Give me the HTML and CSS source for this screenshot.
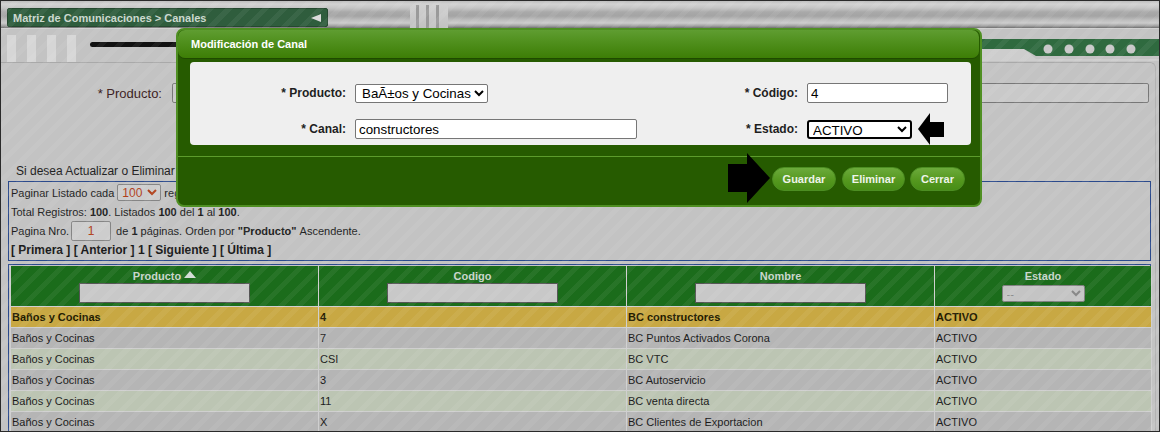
FILE: index.html
```html
<!DOCTYPE html>
<html lang="es">
<head>
<meta charset="utf-8">
<title>Matriz de Comunicaciones &gt; Canales</title>
<link rel="stylesheet" href="styles.css">
</head>
<body>
<div class="frame">
  <div class="topbar">
    <div class="crumb"><span>Matriz de Comunicaciones &gt; Canales</span><span class="tri"></span></div>
    <div class="grip"><i></i><i></i><i></i></div>
  </div>
  <div class="subbar">
    <div class="blocks"><i></i><i></i><i></i><i></i></div>
    <div class="blackline"></div>
    <svg class="band" width="200" height="34" viewBox="0 0 200 34">
      <polygon points="0,21 65,21 77,31 200,31 200,33 0,33" fill="#cdcdcd"/>
      <polygon points="0,11 200,11 200,28 77,28 65,21 0,21" fill="#2f6a3f"/>
      <circle cx="89" cy="21" r="4.5" fill="#c8c8c8"/>
      <circle cx="110" cy="21" r="4.5" fill="#c8c8c8"/>
      <circle cx="131" cy="21" r="4.5" fill="#c8c8c8"/>
      <circle cx="151" cy="21" r="4.5" fill="#c8c8c8"/>
      <circle cx="172" cy="21" r="4.5" fill="#c8c8c8"/>
    </svg>
  </div>
  <div class="content">
    <div class="filter">
      <span class="flabel">* Producto:</span>
      <span class="finput"></span>
    </div>
    <div class="hint">Si desea Actualizar o Eliminar un registro, haga clic sobre la fila correspondiente.</div>
    <div class="paging">
      <div class="pline">Paginar Listado cada <select class="psel"><option>100</option></select> registros por página.</div>
      <div class="pline">Total Registros:&nbsp;<b>100</b>. Listados&nbsp;<b>100</b>&nbsp;del&nbsp;<b>1</b>&nbsp;al&nbsp;<b>100</b>.</div>
      <div class="pline">Pagina Nro. <span class="pinput">1</span> de&nbsp;<b>1</b>&nbsp;páginas. Orden por&nbsp;<b>"Producto"</b>&nbsp;Ascendente.</div>
      <div class="pline nav">[ Primera ] [ Anterior ] 1 [ Siguiente ] [ Última ]</div>
    </div>
    <div class="tablebox">
      <table class="grid">
        <colgroup><col class="c1"><col class="c2"><col class="c3"><col class="c4"></colgroup>
        <thead>
          <tr>
            <th><div class="ht">Producto <span class="up"></span></div><span class="hinput"></span></th>
            <th><div class="ht">Codigo</div><span class="hinput"></span></th>
            <th><div class="ht">Nombre</div><span class="hinput"></span></th>
            <th><div class="ht">Estado</div><select class="hsel"><option>--</option></select></th>
          </tr>
        </thead>
        <tbody>
          <tr class="sel"><td>Baños y Cocinas</td><td>4</td><td>BC constructores</td><td>ACTIVO</td></tr>
          <tr class="odd"><td>Baños y Cocinas</td><td>7</td><td>BC Puntos Activados Corona</td><td>ACTIVO</td></tr>
          <tr class="even"><td>Baños y Cocinas</td><td>CSI</td><td>BC VTC</td><td>ACTIVO</td></tr>
          <tr class="odd"><td>Baños y Cocinas</td><td>3</td><td>BC Autoservicio</td><td>ACTIVO</td></tr>
          <tr class="even"><td>Baños y Cocinas</td><td>11</td><td>BC venta directa</td><td>ACTIVO</td></tr>
          <tr class="odd"><td>Baños y Cocinas</td><td>X</td><td>BC Clientes de Exportacion</td><td>ACTIVO</td></tr>
        </tbody>
      </table>
    </div>
  </div>

  <div class="modal">
    <div class="mtitle">Modificación de Canal</div>
    <div class="mpanel">
      <label class="mlabel">* Producto:</label>
      <div class="mfield"><select class="msel"><option>BaÃ±os y Cocinas</option></select></div>
      <label class="mlabel">* Código:</label>
      <div class="mfield"><input class="minput" type="text" value="4"></div>
      <label class="mlabel">* Canal:</label>
      <div class="mfield"><input class="minput" type="text" value="constructores"></div>
      <label class="mlabel">* Estado:</label>
      <div class="mfield"><select class="msel estado"><option>ACTIVO</option></select></div>
    </div>
    <div class="msep"></div>
    <div class="mbuttons">
      <button class="btn b1">Guardar</button>
      <button class="btn b2">Eliminar</button>
      <button class="btn b3">Cerrar</button>
    </div>
  </div>

  <svg class="arrow a-left" width="28" height="34" viewBox="0 0 28 34">
    <polygon points="0,17 12,1 12,10 26,10 26,25 12,25 12,33" fill="#000"/>
  </svg>
  <svg class="arrow a-right" width="43" height="51" viewBox="0 0 43 51">
    <polygon points="0,11 19,11 19,0 42,25 19,50 19,39 0,39" fill="#000"/>
  </svg>
</div>
</body>
</html>
```
FILE: styles.css
```css
* { box-sizing: border-box; }
html, body { margin: 0; padding: 0; }
body { font-family: "Liberation Sans", Arial, sans-serif; background: #ffffff; }

.frame {
  position: relative;
  width: 1160px;
  height: 432px;
  border: 1px solid #2a2a2a;
  background: #c3c3c3;
  overflow: hidden;
}
.frame::after {
  content: "";
  position: absolute;
  inset: 0;
  pointer-events: none;
  z-index: 1;
  background: repeating-linear-gradient(135deg, rgba(255,255,255,0) 0 8px, rgba(255,255,255,0.055) 8px 13px);
}

/* top bar */
.topbar {
  height: 27px;
  display: flex;
  align-items: flex-start;
  background: linear-gradient(to bottom, #bdbdbd 0, #d2d2d2 3px, #c4c4c4 7px, #a9a9a9 11px, #a4a4a4 15px, #bdbdbd 19px, #cbcbcb 22px, #a0a0a0 25px, #6e6e6e 27px);
}
.crumb {
  margin: 7px 0 0 6px;
  width: 321px;
  height: 19px;
  display: flex;
  align-items: center;
  padding: 0 4px 0 5px;
  background: #2f5d3d;
  border: 1px solid #24482f;
  border-radius: 2px;
  color: #cbd8ce;
  font-weight: bold;
  font-size: 11px;
}
.tri {
  margin-left: auto;
  margin-right: 2px;
  width: 0; height: 0;
  border-top: 4px solid transparent;
  border-bottom: 4px solid transparent;
  border-right: 10px solid #dcdcdc;
}
.grip {
  margin: 4px 0 0 82px;
  width: 38px;
  height: 23px;
  display: flex;
  gap: 7px;
  padding-left: 6px;
  background: linear-gradient(to bottom, #d0d0d0, #c2c2c2);
}
.grip i {
  display: block;
  width: 3px;
  height: 100%;
  background: #9a9a9a;
}

/* sub bar */
.subbar {
  height: 34px;
  display: flex;
  align-items: flex-start;
  border-top: 1px solid #d0d0d0;
}
.blocks {
  margin: 6px 0 0 6px;
  display: flex;
  gap: 11px;
}
.blocks i {
  display: block;
  width: 9px;
  height: 27px;
  background: #d6d6d6;
}
.blackline {
  margin: 13px 0 0 14px;
  width: 120px;
  height: 5px;
  border-radius: 3px;
  background: #111;
}
.band { margin-left: auto; margin-top: -1px; display: block; }

/* content */
.content {
  border-top: 1px solid #a9a9a9;
  border-right: 1px solid #b2b2b2;
  border-radius: 0 6px 0 0;
  margin-right: 3px;
}
.filter {
  margin-top: 20px;
  height: 20px;
  display: flex;
  align-items: center;
}
.flabel {
  width: 161px;
  text-align: right;
  font-size: 13px;
  color: #3a1c1c;
}
.finput {
  margin-left: 10px;
  width: 977px;
  height: 20px;
  border: 1px solid #777;
  border-radius: 2px;
  background: #c9c9c9;
}
.hint {
  margin-top: 61px;
  padding-left: 15px;
  font-size: 12px;
  line-height: 14px;
  color: #222;
  white-space: nowrap;
}
.paging {
  margin: 3px 4px 0 7px;
  border: 1px solid #2b4a8c;
  padding: 1px 2px 1px 2px;
  font-size: 11px;
  color: #1e1e1e;
}
.pline {
  height: 19px;
  display: flex;
  align-items: center;
  white-space: nowrap;
}
.psel {
  margin: 0 3px;
  width: 44px;
  height: 17px;
  font-size: 12px;
  font-family: "Liberation Sans", Arial, sans-serif;
  color: #b0401a;
  background: #cdcdcd;
  border: 1px solid #858585;
  border-radius: 2px;
  padding: 0;
}
.pinput {
  margin: 0 5px 0 2px;
  width: 40px;
  height: 20px;
  display: flex;
  align-items: center;
  justify-content: center;
  font-size: 12px;
  color: #b0401a;
  background: #cdcdcd;
  border: 1px solid #858585;
  border-radius: 2px;
}
.nav { font-size: 12px; font-weight: bold; color: #1a1a1a; }

.tablebox {
  margin: 3px 4px 0 7px;
  border: 1px solid #2b4a8c;
  border-bottom: none;
  padding: 1px 0 0 1px;
  height: 200px;
}
.grid {
  width: 1141px;
  table-layout: fixed;
  border-collapse: collapse;
}
.grid col.c1, .grid col.c2, .grid col.c3 { width: 308px; }
.grid col.c4 { width: 217px; }
.grid th {
  height: 40px;
  padding: 3px 0 0;
  vertical-align: top;
  background: #1b6c1b;
  border: 1px solid #cfcfcf;
  border-top: none;
  color: #c9d6cc;
  font-size: 11px;
  font-weight: bold;
}
.ht { height: 14px; line-height: 13px; display: flex; justify-content: center; align-items: center; gap: 3px; }
.up {
  width: 0; height: 0;
  border-left: 6px solid transparent;
  border-right: 6px solid transparent;
  border-bottom: 7px solid #d4ddd6;
  margin-top: -3px;
}
.hinput {
  display: inline-block;
  width: 171px;
  height: 20px;
  margin-top: 0;
  background: #c8c8c8;
  border: 1px solid #555;
}
.hsel {
  width: 83px;
  height: 17px;
  margin-top: 2px;
  background: #c4c4c4;
  color: #888;
  font-size: 11px;
  border: 1px solid #808080;
  border-radius: 2px;
}
.grid td {
  height: 21px;
  padding: 0 2px 0 1px;
  border: 1px solid #cfcfcf;
  font-size: 11px;
  color: #1a1a1a;
  white-space: nowrap;
}
.grid tr.sel td { background: #c8a843; font-weight: bold; color: #221a00; }
.grid tr.odd td { background: #b5b5b5; }
.grid tr.even td { background: #bcc5b3; }

/* modal */
.modal {
  position: absolute;
  left: 175px;
  top: 27px;
  width: 806px;
  height: 179px;
  z-index: 2;
  background: #265b00;
  border: 2px solid #4f8f22;
  border-radius: 8px;
}
.mtitle {
  height: 28px;
  margin-right: 1px;
  padding-left: 13px;
  line-height: 28px;
  font-size: 11px;
  font-weight: bold;
  color: #ffffff;
  border-radius: 7px;
  background: linear-gradient(to bottom, #5f9d31 0, #4f8f1c 45%, #3d7e06 100%);
  box-shadow: 0 1px 0 #1f4a00;
}
.mpanel {
  margin: 4px 9px 0 12px;
  height: 83px;
  background: #efefef;
  border-radius: 4px;
  padding: 21px 0 6px 0;
  display: grid;
  grid-template-columns: 156px 282px 152px 141px;
  grid-template-rows: 20px 20px;
  column-gap: 9px;
  row-gap: 16px;
}
.mlabel {
  align-self: center;
  text-align: right;
  font-size: 12px;
  font-weight: bold;
  color: #1e1e1e;
  white-space: nowrap;
}
.mfield { display: flex; align-items: center; }
.minput {
  width: 100%;
  height: 20px;
  margin: 0;
  padding: 1px 3px;
  border: 1px solid #767676;
  border-radius: 2px;
  background: #fff;
  font-family: "Liberation Sans", Arial, sans-serif;
  font-size: 13.33px;
  color: #000;
}
.msel {
  width: 133px;
  height: 19px;
  margin: 0;
  padding: 0 0 0 2px;
  border: 1px solid #767676;
  border-radius: 2px;
  background: #fff;
  font-family: "Liberation Sans", Arial, sans-serif;
  font-size: 13.33px;
  color: #000;
}
.msel.estado {
  width: 105px;
  padding-left: 0;
  border: 2px solid #000;
  border-radius: 3px;
}
.msep {
  margin-top: 11px;
  height: 1px;
  background: #5c9c2c;
}
.mbuttons {
  margin-top: 10px;
  display: flex;
  justify-content: flex-end;
  gap: 5px;
  padding-right: 15px;
}
.btn {
  height: 24px;
  margin: 0;
  padding: 0;
  border: 1px solid #4c8e22;
  border-radius: 12px;
  background: linear-gradient(to bottom, #6cab3c 0, #55981f 55%, #478d16 100%);
  color: #eef4ea;
  font-family: "Liberation Sans", Arial, sans-serif;
  font-size: 11px;
  font-weight: bold;
}
.b1 { width: 64px; margin-right: 1px; }
.b2 { width: 63px; }
.b3 { width: 55px; }

.arrow { position: absolute; z-index: 3; display: block; }
.a-left { left: 917px; top: 111px; }
.a-right { left: 727px; top: 152px; }
```
